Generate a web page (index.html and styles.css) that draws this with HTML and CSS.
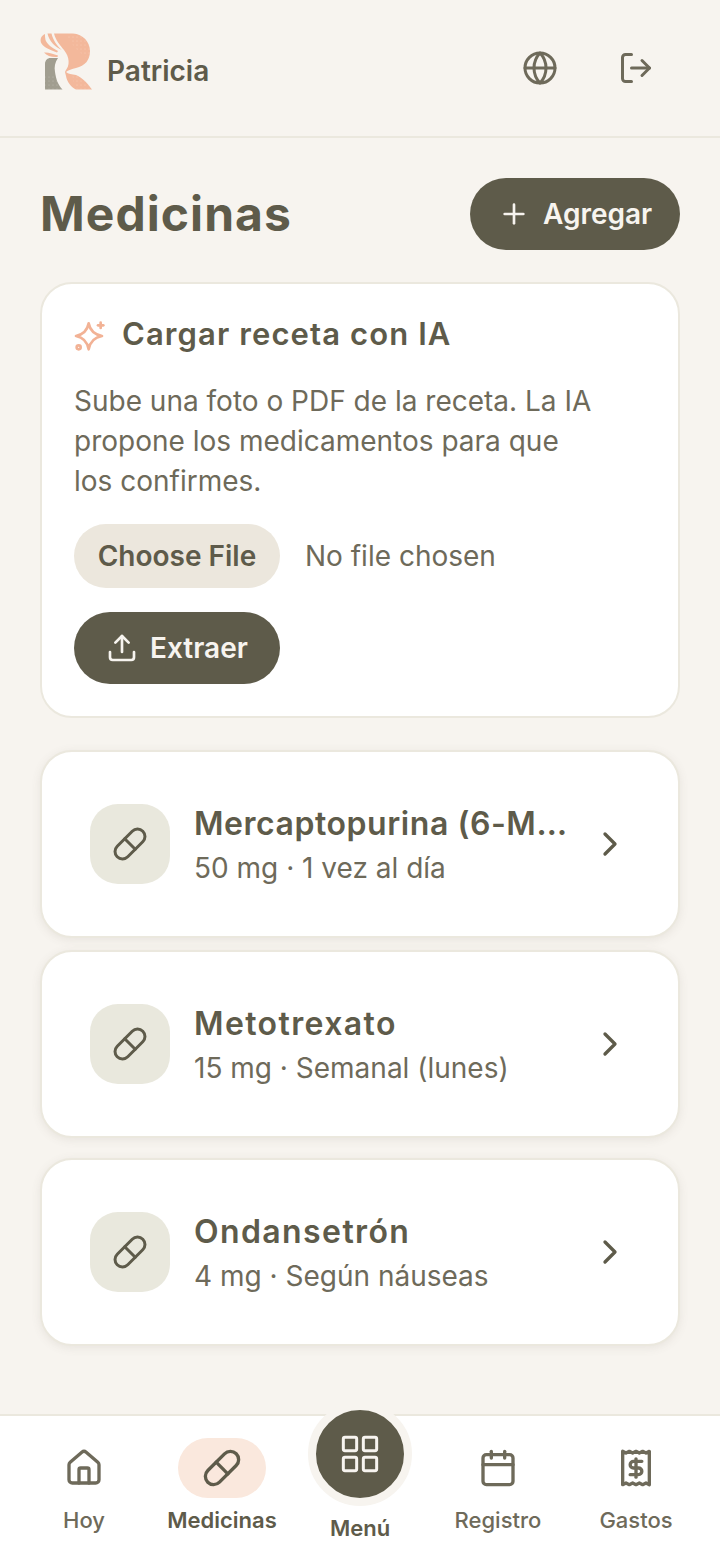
FILE: index.html
```html
<!DOCTYPE html>
<html lang="es">
<head>
    <meta charset="UTF-8">
    <meta name="viewport" content="width=device-width, initial-scale=1.0">
    <title>Medicinas</title>
    <link rel="stylesheet" href="styles.css">
</head>
<body>

    <header class="topbar">
        <div class="brand">
            <svg class="logo" viewBox="38 31 56 60">
                <defs>
                    <pattern id="dots" width="4" height="4" patternUnits="userSpaceOnUse">
                        <circle cx="1" cy="1" r="0.4" fill="#fff" fill-opacity="0.55"/>
                    </pattern>
                </defs>
                <path fill="#f3b89b" d="M54 33.500L73 33.500C83 34 90 42 90 51C90 60 85 66 76 68C72 69 68 70 66 72C68 74 72 74 76 75C83 78 88 84 92 89.500L76 89.500C71 87 67 82 66 76L65 72C65.500 70 68 68 68.500 64C69 60 68 56 66 53L64 50C60 45 56 41 54 33.500Z"/>
                <path fill="url(#dots)" d="M66 34L73 33.500C83 34 90 42 90 51C90 54 89.500 56 88 58C80 54 72 46 66 34ZM72 75L76 75C83 78 88 84 92 89.500L76 89.500C74 85 73 80 72 75Z"/>
                <path fill="#f3b89b" d="M45 34C41 35.500 39.500 40 41.500 43.500C44 47.500 50 50 57 52.500L58 51C52 48 47 44 45.500 40C45 38 45 36 45 34Z"/>
                <path fill="#f3b89b" d="M44 52.500C48 52 53 54 58 55.500L57.500 57C52 57.500 47 56 44 52.500Z"/>
                <path fill="#f3b89b" d="M47.500 33.500L51.500 33.500C53 40 57 46 62 50C55 47 49 41 47.500 33.500Z"/>
                <path fill="#a19e90" d="M45 89.500L45 64C45 60 48 58 50 58L58 58C55 62 54 67 55 72C56 79 58 85 62.500 89.500Z"/>
                <path fill="url(#dots)" d="M45 89.500L45 76L56 76L62.500 89.500Z"/>
            </svg>
            <span class="brand-name">Patricia</span>
        </div>
        <div class="topbar-actions">
            <svg class="icon icon-top" viewBox="0 0 24 24"><circle cx="12" cy="12" r="10"/><path d="M2 12h20"/><path d="M12 2a14.500 14.500 0 0 0 0 20a14.500 14.500 0 0 0 0-20"/></svg>
            <svg class="icon icon-top" viewBox="0 0 24 24"><path d="M9 21H5a2 2 0 0 1-2-2V5a2 2 0 0 1 2-2h4"/><path d="M16 17l5-5-5-5"/><path d="M21 12H9"/></svg>
        </div>
    </header>

    <main class="content">
        <div class="title-row">
            <h1>Medicinas</h1>
            <button class="btn btn-add">
                <svg class="icon icon-plus" viewBox="0 0 24 24"><path d="M5 12h14"/><path d="M12 5v14"/></svg>
                Agregar
            </button>
        </div>

        <section class="card upload-card">
            <div class="upload-head">
                <svg class="icon icon-spark" viewBox="0 0 24 24"><path d="M11 2.500Q12.500 10.500 21 12Q12.500 13.500 11 22Q9.500 13.500 1.500 12Q9.500 10.500 11 2.500Z"/><path d="M20 2v4"/><path d="M18 4h4"/><circle cx="3.500" cy="20.500" r="1.500"/></svg>
                <h2>Cargar receta con IA</h2>
            </div>
            <p class="upload-text">Sube una foto o PDF de la receta. La IA propone los medicamentos para que los confirmes.</p>
            <div class="file-row">
                <button class="btn-file">Choose File</button>
                <span class="file-name">No file chosen</span>
            </div>
            <button class="btn btn-extract">
                <svg class="icon icon-upload" viewBox="0 0 24 24"><path d="M3 15v4a2 2 0 0 0 2 2h14a2 2 0 0 0 2-2v-4"/><path d="M17 8l-5-5-5 5"/><path d="M12 3v12"/></svg>
                Extraer
            </button>
        </section>

        <section class="card med-card first">
            <div class="med-icon">
                <svg class="icon icon-pill" viewBox="0 0 24 24"><path d="M10.500 20.500l10-10a4.950 4.950 0 1 0-7-7l-10 10a4.950 4.950 0 1 0 7 7z"/><path d="M8.500 8.500l7 7"/></svg>
            </div>
            <div class="med-info">
                <h3 class="name-long">Mercaptopurina (6-M…</h3>
                <p>50 mg · 1 vez al día</p>
            </div>
            <svg class="icon icon-chevron" viewBox="0 0 24 24"><path d="M9 18l6-6-6-6"/></svg>
        </section>

        <section class="card med-card second">
            <div class="med-icon">
                <svg class="icon icon-pill" viewBox="0 0 24 24"><path d="M10.500 20.500l10-10a4.950 4.950 0 1 0-7-7l-10 10a4.950 4.950 0 1 0 7 7z"/><path d="M8.500 8.500l7 7"/></svg>
            </div>
            <div class="med-info">
                <h3>Metotrexato</h3>
                <p>15 mg · Semanal (lunes)</p>
            </div>
            <svg class="icon icon-chevron" viewBox="0 0 24 24"><path d="M9 18l6-6-6-6"/></svg>
        </section>

        <section class="card med-card third">
            <div class="med-icon">
                <svg class="icon icon-pill" viewBox="0 0 24 24"><path d="M10.500 20.500l10-10a4.950 4.950 0 1 0-7-7l-10 10a4.950 4.950 0 1 0 7 7z"/><path d="M8.500 8.500l7 7"/></svg>
            </div>
            <div class="med-info">
                <h3>Ondansetrón</h3>
                <p>4 mg · Según náuseas</p>
            </div>
            <svg class="icon icon-chevron" viewBox="0 0 24 24"><path d="M9 18l6-6-6-6"/></svg>
        </section>
    </main>

    <nav class="bottom-nav">
        <div class="nav-item">
            <span class="nav-icon">
                <svg class="icon icon-nav" viewBox="0 0 24 24"><path d="M15 21v-8a1 1 0 0 0-1-1h-4a1 1 0 0 0-1 1v8"/><path d="M3 10a2 2 0 0 1 .7-1.500l7-6a2 2 0 0 1 2.600 0l7 6a2 2 0 0 1 .7 1.500v9a2 2 0 0 1-2 2H5a2 2 0 0 1-2-2z"/></svg>
            </span>
            <span class="nav-label">Hoy</span>
        </div>
        <div class="nav-item active">
            <span class="nav-icon">
                <svg class="icon icon-nav" viewBox="0 0 24 24"><path d="M10.500 20.500l10-10a4.950 4.950 0 1 0-7-7l-10 10a4.950 4.950 0 1 0 7 7z"/><path d="M8.500 8.500l7 7"/></svg>
            </span>
            <span class="nav-label">Medicinas</span>
        </div>
        <div class="nav-item nav-menu">
            <span class="menu-circle">
                <svg class="icon icon-grid" viewBox="0 0 24 24"><rect x="2" y="2" width="8" height="8" rx="1"/><rect x="14" y="2" width="8" height="8" rx="1"/><rect x="2" y="14" width="8" height="8" rx="1"/><rect x="14" y="14" width="8" height="8" rx="1"/></svg>
            </span>
            <span class="nav-label">Menú</span>
        </div>
        <div class="nav-item">
            <span class="nav-icon">
                <svg class="icon icon-nav" viewBox="0 0 24 24"><path d="M8 2v4"/><path d="M16 2v4"/><rect x="3" y="4" width="18" height="18" rx="2"/><path d="M3 10h18"/></svg>
            </span>
            <span class="nav-label">Registro</span>
        </div>
        <div class="nav-item">
            <span class="nav-icon">
                <svg class="icon icon-nav" viewBox="0 0 24 24"><path d="M4 2v20l2-1 2 1 2-1 2 1 2-1 2 1 2-1 2 1V2l-2 1-2-1-2 1-2-1-2 1-2-1-2 1z"/><path d="M15.500 8h-5a1.750 1.750 0 0 0 0 4h3a1.750 1.750 0 0 1 0 4h-5"/><path d="M12 6.500v11"/></svg>
            </span>
            <span class="nav-label">Gastos</span>
        </div>
    </nav>

</body>
</html>
```

FILE: styles.css
```css
* {
    box-sizing: border-box;
}

body {
    font-family: Inter, "Liberation Sans", sans-serif;
    background-color: #f7f4ef;
    color: #5e5b4a;
    display: flex;
    flex-direction: column;
    height: 1560px;
    margin: 0;
    overflow: hidden;
}

h1, h2, h3, p {
    margin: 0;
}

.icon {
    fill: none;
    stroke: currentColor;
    stroke-width: 2;
    stroke-linecap: round;
    stroke-linejoin: round;
    flex-shrink: 0;
}

/* barra superior */
.topbar {
    display: flex;
    align-items: center;
    justify-content: space-between;
    height: 138px;
    padding: 0 66px 0 38px;
    border-bottom: 2px solid #ebe8de;
}

.brand {
    display: flex;
    align-items: center;
    gap: 13px;
}

.logo {
    width: 56px;
    height: 60px;
    margin-top: -14px;
}

.brand-name {
    font-size: 28px;
    font-weight: 600;
    margin-top: 6px;
}

.topbar-actions {
    display: flex;
    align-items: center;
    gap: 60px;
    color: #6e6a5a;
}

.icon-top {
    width: 36px;
    height: 36px;
}

/* contenido */
.content {
    padding: 40px 40px 0;
}

.title-row {
    display: flex;
    align-items: center;
    justify-content: space-between;
    height: 72px;
    margin-bottom: 32px;
}

h1 {
    font-size: 48px;
    font-weight: 700;
    letter-spacing: 1.05px;
    margin-bottom: 2px;
}

.btn {
    display: flex;
    align-items: center;
    background-color: #5e5b4a;
    color: #f7f4ef;
    font-family: inherit;
    font-size: 28px;
    font-weight: 600;
    height: 72px;
    border: none;
    border-radius: 36px;
}

.btn-add {
    width: 210px;
    padding: 0 28px;
    gap: 13px;
}

.icon-plus {
    width: 32px;
    height: 32px;
}

.card {
    background-color: #fff;
    border: 2px solid #ebe8de;
    border-radius: 32px;
}

.upload-card {
    height: 436px;
    padding: 32px;
}

.upload-head {
    display: flex;
    align-items: center;
    gap: 16px;
    height: 40px;
}

.icon-spark {
    width: 32px;
    height: 32px;
    color: #f2b295;
}

h2 {
    font-size: 31px;
    font-weight: 600;
    letter-spacing: 1.1px;
    margin-bottom: 5px;
}

.upload-text {
    font-size: 28px;
    line-height: 40px;
    color: #6e6a5a;
    margin-top: 25px;
    width: 530px;
}

.file-row {
    display: flex;
    align-items: center;
    gap: 25px;
    margin-top: 23px;
}

.btn-file {
    width: 206px;
    height: 64px;
    background-color: #ece7dd;
    color: #5e5b4a;
    font-family: inherit;
    font-size: 28px;
    font-weight: 600;
    border: none;
    border-radius: 32px;
}

.file-name {
    font-size: 28px;
    color: #6e6a5a;
}

.btn-extract {
    width: 206px;
    margin-top: 24px;
    padding: 0 32px;
    gap: 12px;
}

.icon-upload {
    width: 32px;
    height: 32px;
}

.med-card {
    display: flex;
    align-items: center;
    height: 188px;
    padding: 0 48px;
    box-shadow: 0 2px 10px rgba(94, 91, 74, 0.1);
}

.med-card.first {
    margin-top: 32px;
}

.med-card.second {
    margin-top: 12px;
}

.med-card.third {
    margin-top: 20px;
}

.med-icon {
    display: flex;
    align-items: center;
    justify-content: center;
    width: 80px;
    height: 80px;
    background-color: #e9e8dd;
    border-radius: 28px;
    flex-shrink: 0;
}

.icon-pill {
    width: 36px;
    height: 36px;
}

.med-info {
    flex: 1;
    min-width: 0;
    margin-left: 24px;
    margin-right: 20px;
}

h3 {
    font-size: 32px;
    font-weight: 600;
    letter-spacing: 1.4px;
    line-height: 44px;
    margin-top: 2px;
    white-space: nowrap;
}

h3.name-long {
    letter-spacing: 0.55px;
}

.med-info p {
    font-size: 28px;
    line-height: 40px;
    color: #6e6a5a;
    margin-top: 2px;
}

.icon-chevron {
    width: 40px;
    height: 40px;
    color: #5e5b4a;
}

/* navegacion inferior */
.bottom-nav {
    display: flex;
    justify-content: space-between;
    height: 146px;
    margin-top: auto;
    padding: 0 15px;
    background-color: #fff;
    border-top: 2px solid #ebe8de;
}

.nav-item {
    display: flex;
    flex-direction: column;
    align-items: center;
    width: 138px;
    padding-top: 22px;
    color: #6e6a5a;
}

.nav-icon {
    display: flex;
    align-items: center;
    justify-content: center;
    width: 88px;
    height: 60px;
    border-radius: 30px;
}

.icon-nav {
    width: 40px;
    height: 40px;
}

.nav-label {
    font-size: 22px;
    line-height: 28px;
    font-weight: 500;
    margin-top: 8px;
}

.nav-item.active .nav-icon {
    background-color: #fae8dd;
    color: #5e5b4a;
}

.nav-item.active .nav-label {
    color: #5e5b4a;
    font-weight: 600;
}

.nav-menu {
    padding-top: 0;
    margin-top: -14px;
    color: #5e5b4a;
}

.menu-circle {
    display: flex;
    align-items: center;
    justify-content: center;
    width: 104px;
    height: 104px;
    background-color: #5e5b4a;
    color: #f7f4ef;
    border: 8px solid #f7f4ef;
    border-radius: 50%;
}

.icon-grid {
    width: 40px;
    height: 40px;
    stroke-width: 1.800;
}

.nav-menu .nav-label {
    font-weight: 600;
    margin-top: 8px;
}
```
